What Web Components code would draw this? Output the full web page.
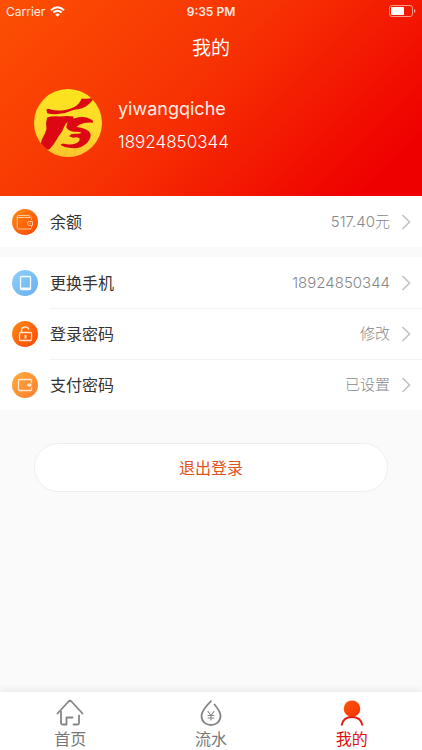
<!DOCTYPE html>
<html lang="zh-CN">
<head>
<meta charset="utf-8">
<meta name="viewport" content="width=device-width, initial-scale=1">
<title>我的</title>
<style>
html, body { margin: 0; height: 100%; }
body { font-family: Inter, "Noto Sans CJK SC", sans-serif; background: #fafafa; color: #333; }
</style>
</head>
<body>
<account-page></account-page>
<script>
const define = (name, html) => {
  const template = document.createElement('template');
  template.innerHTML = html;
  customElements.define(name, class extends HTMLElement {
    constructor() {
      super();
      this.attachShadow({ mode: 'open' }).append(template.content.cloneNode(true));
    }
  });
};

define('status-bar', `
<style>
:host { display: grid; grid-template-columns: 1fr auto 1fr; align-items: center; height: 22px; padding: 0 6px; font-size: 12px; color: #ffe9e0; }
.left { display: flex; align-items: center; gap: 5px; }
.time { font-weight: 600; }
.battery { justify-self: end; }
svg { display: block; }
</style>
<span class="left"><span>Carrier</span>
<svg width="15" height="11" viewBox="0 0 15 11" fill="none" stroke="#fff" stroke-width="2"><path d="M1 4.2Q7.5-1.8 14 4.2M3.3 6.6Q7.5 2.8 11.7 6.6"/><path d="M7.5 10.8L5.2 8.4Q7.5 6.5 9.8 8.4Z" fill="#fff" stroke="none"/></svg></span>
<span class="time">9:35 PM</span>
<svg class="battery" width="27" height="12" viewBox="0 0 27 12"><rect x=".5" y=".5" width="23" height="11" rx="2.5" fill="none" stroke="#ff9a85"/><rect x="2" y="2" width="13" height="8" rx="1" fill="#fff"/><path d="M25 4q1.5.5 1.5 2T25 8z" fill="#ff9a85"/></svg>`);

define('profile-header', `
<style>
:host { display: block; height: 196px; background: linear-gradient(135deg, #fc5003 0%, #f73203 45%, #ef0000 90%); color: #fff; }
h1 { margin: 0; font-size: 19px; line-height: 28px; padding-top: 13px; font-weight: 400; text-align: center; }
.profile { display: flex; align-items: center; gap: 16px; padding: 26px 34px 0; color: #ffebe4; }
svg { display: block; flex: none; }
.info { display: grid; gap: 8px; padding-top: 3px; }
.name { font-size: 18px; line-height: 26px; }
.phone { font-size: 17px; line-height: 24px; font-weight: 300; color: #fff; }
</style>
<status-bar></status-bar>
<h1><slot name="title"></slot></h1>
<div class="profile">
<svg width="68" height="68" viewBox="13 9 202 202" role="img" aria-label="头像">
<defs><linearGradient id="y" x2="0" y2="1"><stop stop-color="#fce41c"/><stop offset=".6" stop-color="#fcda2b"/><stop offset="1" stop-color="#fbc52c"/></linearGradient><clipPath id="c"><circle cx="114" cy="110" r="101"/></clipPath></defs>
<circle cx="114" cy="110" r="101" fill="url(#y)"/>
<g clip-path="url(#c)"><path d="M112 183L106 208M137 183L133 207" stroke="#eeb62b" stroke-width="2"/>
<path fill="#dc0713" d="M50 69Q56 66 64 71Q80 74 101 72Q125 69 139 59Q149 50 155 37Q171 39 188 36Q190 41 184 46Q172 60 156 66Q144 69 132 71Q109 82 84 83Q68 85 52 81Z"/>
<path fill="#dc0713" d="M52 94Q68 88 90 91Q112 87 130 91L130 98Q118 105 107 112Q101 123 96 136Q86 148 80 160Q71 177 58 189Q46 191 34 181Q32 171 36 160Q46 143 50 128Q47 108 52 94Z"/>
<path fill="#dc0713" d="M109 123Q108 104 134 96Q162 88 180 98Q190 102 188 109Q176 108 163 110Q147 113 139 122Q153 123 168 129Q184 138 181 150Q177 168 157 179Q142 187 126 184Q107 185 93 176Q92 171 102 172Q121 176 137 171Q149 166 149 156Q139 150 130 154L117 149Q123 140 140 142Q150 143 154 139Q149 135 135 136Q116 135 109 123Z"/></g>
</svg>
<div class="info"><span class="name"><slot name="name"></slot></span><span class="phone"><slot name="phone"></slot></span></div>
</div>`);

define('list-group', `
<style>
:host { display: block; background: #fff; }
::slotted(list-row:not(:first-of-type)) { --line: #f4f4f4; }
</style><slot></slot>`);

define('list-row', `
<style>
:host { display: block; }
button { box-sizing: border-box; width: 100%; height: 51px; padding: 0 11px 0 12px; border: 0; background: none; font: inherit; text-align: left; display: flex; align-items: center; gap: 12px; color: #333; cursor: pointer; }
::slotted(svg) { display: block; width: 26px; height: 26px; flex: none; }
.body { flex: 1; align-self: stretch; display: flex; align-items: center; gap: 11px; margin-right: -11px; padding-right: 11px; background: linear-gradient(var(--line, transparent), var(--line, transparent)) top / 100% 1px no-repeat; }
.label { flex: 1; font-size: 16px; line-height: 24px; }
.value { font-size: 15px; line-height: 24px; font-weight: var(--value-weight, 300); color: #888; }
.chevron { display: block; flex: none; }
</style>
<button type="button"><slot name="icon"></slot><span class="body"><span class="label"><slot></slot></span><span class="value"><slot name="value"></slot></span>
<svg class="chevron" width="10" height="16" viewBox="0 0 10 16" fill="none" stroke="#c4c4c4" stroke-width="1.700"><path d="M1.500 1L8.500 8L1.500 15"/></svg></span></button>`);

define('pill-button', `
<style>
:host { display: block; padding: 33px 34px 0; }
button { box-sizing: border-box; width: 100%; height: 49px; border: 1px solid #eee; border-radius: 25px; background: #fff; color: #e0551f; font: inherit; font-size: 16px; line-height: 24px; cursor: pointer; }
</style><button type="button"><slot></slot></button>`);

define('tab-bar', `
<style>
:host { display: block; margin-top: auto; background: #fff; box-shadow: 0 -2px 8px rgba(0,0,0,.07); }
nav { display: grid; grid-template-columns: repeat(3, 1fr); height: 58px; }
</style><nav><slot></slot></nav>`);

define('tab-item', `
<style>
:host { display: block; }
a { display: flex; flex-direction: column; align-items: center; padding-top: 7px; font-size: 16px; line-height: 24px; color: var(--tab-color, #777); text-decoration: none; }
::slotted(svg) { display: block; width: 28px; height: 28px; }
</style><a href="#"><slot name="icon"></slot><span><slot></slot></span></a>`);

define('account-page', `
<style>
:host { display: flex; flex-direction: column; min-height: 100%; }
.balance { margin-bottom: 10px; }
.active { --tab-color: #dc1010; }
</style>
<profile-header><span slot="title">我的</span><span slot="name">yiwangqiche</span><span slot="phone">18924850344</span></profile-header>
<list-group class="balance">
<list-row><svg slot="icon" viewBox="0 0 26 26" fill="none"><defs><linearGradient id="g1" x2="1" y2="1"><stop stop-color="#ff8b13"/><stop offset="1" stop-color="#fa4605"/></linearGradient></defs><circle cx="13" cy="13" r="13" fill="url(#g1)"/><g stroke="#ffc799"><path d="M19.500 11V9.500q0-1-1-1H6q-.8 0-.8-1 0-1 1-1h10.800q1 0 1 1v1M5.200 7.500v11q0 1.500 1.500 1.500h11.300q1.500 0 1.500-1.500V17"/><path d="M20.500 12.500h-3q-2 0-2 2t2 2h3z"/><path d="M17.500 14.500h1"/></g></svg>余额<span slot="value">517.40元</span></list-row>
</list-group>
<list-group>
<list-row><svg slot="icon" viewBox="0 0 26 26" fill="none"><defs><linearGradient id="g2" x2="1" y2="1"><stop stop-color="#91d0fa"/><stop offset="1" stop-color="#65aef0"/></linearGradient></defs><circle cx="13" cy="13" r="13" fill="url(#g2)"/><rect x="8.500" y="6.500" width="10" height="13" rx="1" stroke="#f5fbff" stroke-width="1.300"/><path d="M8.500 18.500h10" stroke="#f5fbff" stroke-width="2"/></svg>更换手机<span slot="value">18924850344</span></list-row>
<list-row><svg slot="icon" viewBox="0 0 26 26" fill="none"><defs><linearGradient id="g3" x2="1" y2="1"><stop stop-color="#ff8b13"/><stop offset="1" stop-color="#fa4605"/></linearGradient></defs><circle cx="13" cy="13" r="13" fill="url(#g3)"/><g stroke="#ffe4cc" stroke-width="1.300"><rect x="7.500" y="11.500" width="12" height="8" rx="1"/><path d="M9.500 11.500V9.500q0-3.500 3.700-3.500 3 0 3.800 2.500"/><path d="M13.500 14v3.500" stroke-width="2"/></g></svg>登录密码<span slot="value">修改</span></list-row>
<list-row><svg slot="icon" viewBox="0 0 26 26" fill="none"><defs><linearGradient id="g4" x2="1" y2="1"><stop stop-color="#fdae3b"/><stop offset="1" stop-color="#fa7c31"/></linearGradient></defs><circle cx="13" cy="13" r="13" fill="url(#g4)"/><path d="M19.500 10.500V8.500q0-1-1-1H7.500q-1 0-1 1v9q0 1 1 1h11q1 0 1-1v-2" stroke="#ffe7ce" stroke-width="1.300"/><path d="M19.500 11.500h-3q-1.500 0-1.500 1.500t1.500 1.500h3z" fill="#ffe7ce"/></svg>支付密码<span slot="value">已设置</span></list-row>
</list-group>
<pill-button>退出登录</pill-button>
<tab-bar>
<tab-item><svg slot="icon" viewBox="0 0 28 28" fill="none" stroke="#858585" stroke-width="1.800" stroke-linecap="round" stroke-linejoin="round"><path d="M1.500 14.500L12.500 2.500q1.500-1.500 3 0L26.500 14.500M5 12.500V24q0 1.500 1.500 1.500h4V18.500h6M23 16.500V24q0 1.500-1.500 1.500H17.500"/></svg>首页</tab-item>
<tab-item><svg slot="icon" viewBox="0 0 28 28" fill="none" stroke="#858585" stroke-width="1.800" stroke-linecap="round" stroke-linejoin="round"><path d="M14 2.200Q4.500 11.500 4.500 17C4.500 22.500 9 26 14 26S23.500 22.500 23.500 17Q23.500 12.500 17.500 5.500"/><path d="M11 12.500l3 4 3-4M11 16.500h6M11 19h6M14 16.500v4.500" stroke-width="1.100"/></svg>流水</tab-item>
<tab-item class="active"><svg slot="icon" viewBox="0 0 28 28" fill="none"><defs><linearGradient id="g5" x2="1" y2="1"><stop stop-color="#ff5709"/><stop offset="1" stop-color="#ef3303"/></linearGradient></defs><circle cx="14" cy="9.700" r="8.300" fill="url(#g5)"/><path d="M3.500 26.500Q5 18 14 18T24.500 26.500" stroke="#e51b0b" stroke-width="1.800"/></svg>我的</tab-item>
</tab-bar>`);
</script>
</body>
</html>
